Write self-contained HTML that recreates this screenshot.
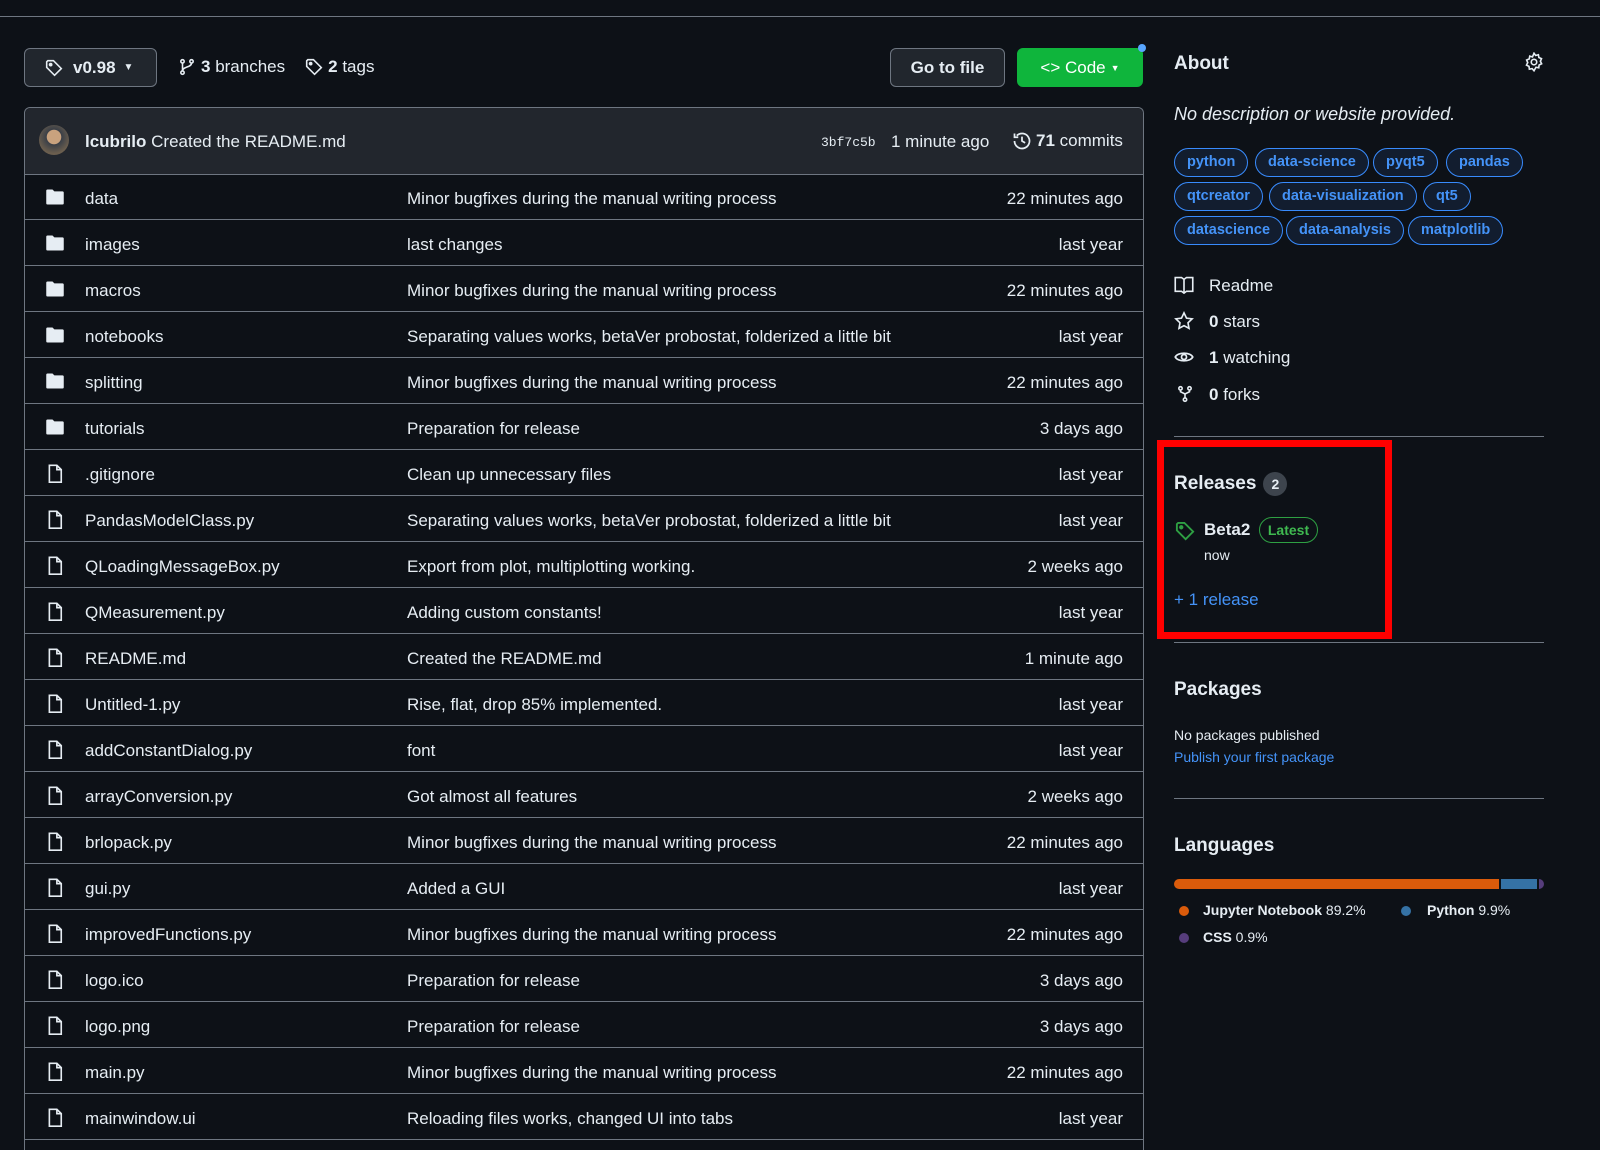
<!DOCTYPE html>
<html><head><meta charset="utf-8"><style>
*{box-sizing:border-box;margin:0;padding:0}
html{width:1600px;height:1150px;overflow:hidden}
body{width:1600px;height:1150px;background:#0d1117;color:#e6edf3;font-family:"Liberation Sans",sans-serif;position:relative;overflow:hidden}
.abs{position:absolute}
.topline{left:0;top:16px;width:1600px;height:1px;background:#6e7681}
.btn{position:absolute;border:1px solid #6e7681;border-radius:6px;background:#21262d;display:flex;align-items:center;font-size:17px;font-weight:bold}
.tbl{left:24px;top:107px;width:1120px;height:1043px;border:1px solid #6e7681;border-bottom:none;border-radius:6px 6px 0 0;overflow:hidden}
.hdr{position:absolute;left:0;top:0;width:100%;height:67px;background:#22262d;border-bottom:1px solid #6e7681;border-radius:6px 6px 0 0}
.row{position:absolute;left:0;width:100%;height:46px;border-bottom:1px solid #6e7681;font-size:17px}
.row .ic{position:absolute;left:20px;top:14px}
.row .n{position:absolute;left:60px;top:15px}
.row .m{position:absolute;left:382px;top:15px}
.row .t{position:absolute;right:20px;top:15px}
.pill{position:absolute;height:29px;border:1px solid #388bfd;background:#121d2f;color:#4493f8;border-radius:15px;font-size:14.5px;font-weight:bold;line-height:27px;padding:0 12px}
.side{position:absolute;left:1174px;font-size:17px}
.div{position:absolute;left:1174px;width:370px;height:1px;background:#6e7681}
h2{font-size:19px;font-weight:bold}
</style></head><body>
<div class="abs topline"></div>
<div class="btn" style="left:24px;top:48px;width:133px;height:39px;padding-left:20px">
<svg width="18" height="18" viewBox="0 0 16 16" fill="none" stroke="#e6edf3" stroke-width="1.4"><path d="M1.5 2.5v5l7 7 6-6-7-7h-5z"/><circle cx="5" cy="5" r="1" fill="#e6edf3"/></svg>
<span style="margin-left:10px">v0.98</span><span style="margin-left:8px;font-size:10px">▼</span></div>
<div class="abs" style="left:178px;top:57px;font-size:17px;display:flex;align-items:center">
<svg width="18" height="20" viewBox="0 0 16 16" fill="none" stroke="#e6edf3" stroke-width="1.4"><circle cx="4" cy="3" r="1.5"/><circle cx="12" cy="3" r="1.5"/><circle cx="4" cy="13" r="1.5"/><path d="M4 4.5v7M12 4.5c0 4-8 3-8 7"/></svg>
<b style="margin-left:5px">3</b>&nbsp;branches
<svg style="margin-left:20px" width="18" height="18" viewBox="0 0 16 16" fill="none" stroke="#e6edf3" stroke-width="1.4"><path d="M1.5 2.5v5l7 7 6-6-7-7h-5z"/><circle cx="5" cy="5" r="1" fill="#e6edf3"/></svg>
<b style="margin-left:5px">2</b>&nbsp;tags</div>
<div class="btn" style="left:890px;top:48px;width:115px;height:39px;justify-content:center">Go to file</div>
<div class="btn" style="left:1017px;top:48px;width:126px;height:39px;justify-content:center;background:#0fb53c;border-color:#0fb53c;font-weight:normal;color:#fff">&lt;&gt;&nbsp;Code <span style="font-size:9px;margin-left:5px">▼</span></div>
<div class="abs" style="left:1138px;top:44px;width:8px;height:8px;border-radius:50%;background:#58a6ff"></div>

<div class="abs tbl">
<div class="hdr">
<div class="abs" style="left:14px;top:17px;width:30px;height:30px;border-radius:50%;background:radial-gradient(circle at 50% 40%,#c9a27e 0 30%,#3a3f47 32%,#6b5e4e 70%)"></div>
<div class="abs" style="left:60px;top:24px;font-size:17px"><b>lcubrilo</b> Created the README.md</div>
<div class="abs" style="left:796px;top:27px;font-size:13px;font-family:'Liberation Mono',monospace">3bf7c5b</div>
<div class="abs" style="left:866px;top:24px;font-size:17px">1 minute ago</div>
<div class="abs" style="left:987px;top:23px;font-size:17px;display:flex;align-items:center"><svg width="20" height="20" viewBox="0 0 16 16" fill="none" stroke="#e6edf3" stroke-width="1.4"><path d="M2 8a6 6 0 1 0 1.8-4.3M2 2v3h3M8 4.5V8l2.5 1.5"/></svg><b style="margin-left:4px">71</b>&nbsp;commits</div>
</div>
<div id="rows"></div>
</div>

<div class="side" style="top:53px"><h2>About</h2></div>
<svg class="abs" style="left:1524px;top:52px" width="20" height="20" viewBox="0 0 16 16" fill="none" stroke="#e6edf3" stroke-width="1.3"><circle cx="8" cy="8" r="2.2"/><path d="M8 1l1.3 1.8 2.2-.6.4 2.2 2.1.9-.9 2.1 1 2-2 1-.3 2.2-2.2-.4L8 15l-1.5-1.7-2.2.4-.3-2.2-2-1 1-2-.9-2.1 2.1-.9.4-2.2 2.2.6z"/></svg>
<div class="side" style="top:104px;font-style:italic;font-size:18px">No description or website provided.</div>
<div class="pill" style="left:1174px;top:148px">python</div>
<div class="pill" style="left:1255px;top:148px">data-science</div>
<div class="pill" style="left:1373px;top:148px">pyqt5</div>
<div class="pill" style="left:1446px;top:148px">pandas</div>
<div class="pill" style="left:1174px;top:182px">qtcreator</div>
<div class="pill" style="left:1269px;top:182px">data-visualization</div>
<div class="pill" style="left:1423px;top:182px">qt5</div>
<div class="pill" style="left:1174px;top:216px">datascience</div>
<div class="pill" style="left:1286px;top:216px">data-analysis</div>
<div class="pill" style="left:1408px;top:216px">matplotlib</div>

<svg class="abs" style="left:1174px;top:276px" width="20" height="18" viewBox="0 0 16 14" fill="none" stroke="#e6edf3" stroke-width="1.3"><path d="M1 1h5l2 1.5L10 1h5v11h-5l-2 1.5L6 12H1zM8 2.5v11"/></svg>
<div class="side" style="left:1209px;top:276px">Readme</div>
<svg class="abs" style="left:1174px;top:311px" width="20" height="20" viewBox="0 0 16 16" fill="none" stroke="#e6edf3" stroke-width="1.3"><path d="M8 1.5l2 4.2 4.5.6-3.3 3.1.8 4.5L8 11.7l-4 2.2.8-4.5L1.5 6.3 6 5.7z"/></svg>
<div class="side" style="left:1209px;top:312px"><b>0</b> stars</div>
<svg class="abs" style="left:1174px;top:348px" width="20" height="18" viewBox="0 0 16 14" fill="none" stroke="#e6edf3" stroke-width="1.4"><path d="M1 7c2-4 12-4 14 0-2 4-12 4-14 0z"/><circle cx="8" cy="7" r="2"/></svg>
<div class="side" style="left:1209px;top:348px"><b>1</b> watching</div>
<svg class="abs" style="left:1176px;top:384px" width="18" height="20" viewBox="0 0 16 16" fill="none" stroke="#e6edf3" stroke-width="1.4"><circle cx="4" cy="3" r="1.5"/><circle cx="12" cy="3" r="1.5"/><circle cx="8" cy="13" r="1.5"/><path d="M4 4.5v1.5l4 2 4-2V4.5M8 8v3.5"/></svg>
<div class="side" style="left:1209px;top:385px"><b>0</b> forks</div>

<div class="div" style="top:436px"></div>
<div class="abs" style="left:1157px;top:440px;width:235px;height:199px;border:7px solid #ff0000"></div>
<div class="side" style="top:472px;display:flex;align-items:center"><h2>Releases</h2><span style="margin-left:7px;width:24px;height:24px;border-radius:12px;background:#3d444d;font-size:14px;font-weight:bold;display:inline-flex;align-items:center;justify-content:center">2</span></div>
<svg class="abs" style="left:1175px;top:521px" width="20" height="20" viewBox="0 0 16 16" fill="none" stroke="#2ea043" stroke-width="1.5"><path d="M1.5 2.5v5l7 7 6-6-7-7h-5z"/><circle cx="5" cy="5" r="1" fill="#2ea043"/></svg>
<div class="side" style="left:1204px;top:520px;font-weight:bold">Beta2</div>
<div class="abs" style="left:1259px;top:517px;width:59px;height:26px;border:1px solid #2ea043;border-radius:13px;color:#3fb950;font-size:14px;font-weight:bold;text-align:center;line-height:24px">Latest</div>
<div class="side" style="left:1204px;top:547px;font-size:14px">now</div>
<div class="side" style="top:590px;color:#4493f8">+ 1 release</div>
<div class="div" style="top:642px"></div>

<div class="side" style="top:679px"><h2>Packages</h2></div>
<div class="side" style="top:727px;font-size:14px">No packages published</div>
<div class="side" style="top:749px;font-size:14px;color:#4493f8">Publish your first package</div>
<div class="div" style="top:798px"></div>
<div class="side" style="top:835px"><h2>Languages</h2></div>
<div class="abs" style="left:1174px;top:879px;width:370px;height:10px;border-radius:5px;overflow:hidden;display:flex">
<div style="width:325px;background:#da5b0b"></div><div style="width:2px;background:#0d1117"></div><div style="width:36px;background:#3572a5"></div><div style="width:2px;background:#0d1117"></div><div style="flex:1;background:#563d7c"></div></div>
<div class="abs" style="left:1179px;top:906px;width:10px;height:10px;border-radius:50%;background:#da5b0b"></div>
<div class="side" style="left:1203px;top:902px;font-size:14px"><b>Jupyter Notebook</b> 89.2%</div>
<div class="abs" style="left:1401px;top:906px;width:10px;height:10px;border-radius:50%;background:#3572a5"></div>
<div class="side" style="left:1427px;top:902px;font-size:14px"><b>Python</b> 9.9%</div>
<div class="abs" style="left:1179px;top:933px;width:10px;height:10px;border-radius:50%;background:#563d7c"></div>
<div class="side" style="left:1203px;top:929px;font-size:14px"><b>CSS</b> 0.9%</div>

<script>
const R=[["d","data","Minor bugfixes during the manual writing process","22 minutes ago"],
["d","images","last changes","last year"],
["d","macros","Minor bugfixes during the manual writing process","22 minutes ago"],
["d","notebooks","Separating values works, betaVer probostat, folderized a little bit","last year"],
["d","splitting","Minor bugfixes during the manual writing process","22 minutes ago"],
["d","tutorials","Preparation for release","3 days ago"],
["f",".gitignore","Clean up unnecessary files","last year"],
["f","PandasModelClass.py","Separating values works, betaVer probostat, folderized a little bit","last year"],
["f","QLoadingMessageBox.py","Export from plot, multiplotting working.","2 weeks ago"],
["f","QMeasurement.py","Adding custom constants!","last year"],
["f","README.md","Created the README.md","1 minute ago"],
["f","Untitled-1.py","Rise, flat, drop 85% implemented.","last year"],
["f","addConstantDialog.py","font","last year"],
["f","arrayConversion.py","Got almost all features","2 weeks ago"],
["f","brlopack.py","Minor bugfixes during the manual writing process","22 minutes ago"],
["f","gui.py","Added a GUI","last year"],
["f","improvedFunctions.py","Minor bugfixes during the manual writing process","22 minutes ago"],
["f","logo.ico","Preparation for release","3 days ago"],
["f","logo.png","Preparation for release","3 days ago"],
["f","main.py","Minor bugfixes during the manual writing process","22 minutes ago"],
["f","mainwindow.ui","Reloading files works, changed UI into tabs","last year"],
["x","","",""]];
const folder='<svg width="20" height="18" viewBox="0 0 16 14"><path d="M1 2a1 1 0 0 1 1-1h4l1.5 1.5H14a1 1 0 0 1 1 1V12a1 1 0 0 1-1 1H2a1 1 0 0 1-1-1z" fill="#e6edf3"/></svg>';
const file='<svg width="20" height="20" viewBox="0 0 16 16" fill="none" stroke="#e6edf3" stroke-width="1.3"><path d="M3.5 1h6l3.5 3.5v10h-9.5zM9.5 1v3.5H13"/></svg>';
let h='';R.forEach((r,i)=>{h+=`<div class="row" style="top:${66+i*46}px"><span class="ic">${r[0]=="d"?folder:r[0]=="f"?file:""}</span><span class="n">${r[1]}</span><span class="m">${r[2]}</span><span class="t">${r[3]}</span></div>`});
document.getElementById('rows').innerHTML=h;
</script>
</body></html>
